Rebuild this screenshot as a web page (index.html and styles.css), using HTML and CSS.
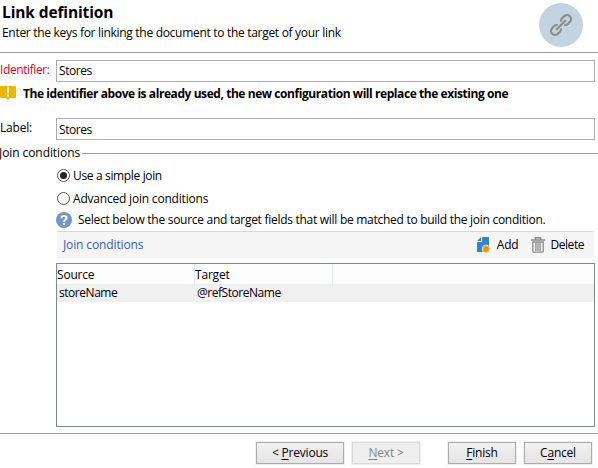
FILE: index.html
```
<!DOCTYPE html>
<html lang="en">
<head>
<meta charset="utf-8">
<title>Link definition</title>
<link rel="stylesheet" href="styles.css">
</head>
<body>
<main class="wizard">
  <header class="header">
    <div>
      <h1 class="title">Link definition</h1>
      <p class="subtitle">Enter the keys for linking the document to the target of your link</p>
    </div>
    <svg class="link-icon" width="44" height="44" viewBox="0 0 44 44">
      <circle cx="22" cy="22" r="22" fill="#c3d4e0"/>
      <g transform="translate(22 22) rotate(-45)" fill="none" stroke="#8b8c8d" stroke-width="2.200">
        <path d="M-2.500 -2.200Q-3.300 -4 -5.500 -4H-8.500a4 4 0 0 0 0 8h3Q-3.300 4 -2.500 2.200"/>
        <path d="M2.500 -2.200Q3.300 -4 5.500 -4H8.500a4 4 0 0 1 0 8h-3Q3.300 4 2.500 2.200"/>
        <path d="M-6 0H6" stroke-linecap="round"/>
      </g>
    </svg>
  </header>

  <section class="fields">
    <div class="field">
      <span class="field-label required">Identifier:</span>
      <div class="input">Stores</div>
    </div>
    <div class="warning">
      <svg width="16" height="15" viewBox="0 0 16 15">
        <path d="M1 0h14a1 1 0 0 1 1 1v10a1 1 0 0 1-1 1h-5l-2 2-2-2H1a1 1 0 0 1-1-1V1a1 1 0 0 1 1-1z" fill="#edb700"/>
        <path d="M7 1.500h2v5.500H7zM7 8.500h2v2H7z" fill="#fff"/>
      </svg>
      <strong class="warning-text">The identifier above is already used, the new configuration will replace the existing one</strong>
    </div>
    <div class="field">
      <span class="field-label">Label:</span>
      <div class="input lower">Stores</div>
    </div>
  </section>

  <section class="group">
    <div class="legend"><span>Join conditions</span></div>
    <div class="group-body">
      <div class="option"><span class="radio checked"></span><span class="simple">Use a simple join</span></div>
      <div class="option second"><span class="radio"></span><span>Advanced join conditions</span></div>
      <div class="hint">
        <svg width="16" height="16" viewBox="0 0 16 16">
          <circle cx="8" cy="8" r="8" fill="#7396c8"/>
          <path d="M5.500 6.200C5.500 3 10.600 3.200 10.600 5.900C10.600 7.700 8 7.700 8 9.700" fill="none" stroke="#fff" stroke-width="1.900"/>
          <path d="M7 11h2v2H7z" fill="#fff"/>
        </svg>
        <span class="hint-text">Select below the source and target fields that will be matched to build the join condition.</span>
      </div>
      <div class="toolbar">
        <span class="toolbar-title">Join conditions</span>
        <span class="action add">
          <svg width="14" height="16" viewBox="0 0 14 16">
            <path d="M5 0h7v15H0V5h5z" fill="#2e86d0"/>
            <path d="M0 4l4-4v4z" fill="#2e86d0"/>
            <circle cx="9" cy="12" r="4.200" fill="#f5f5f5"/>
            <path d="M9 7.800v8.200M4.800 12h8.400M6.100 9.100l5.800 5.800M11.900 9.100l-5.800 5.800" stroke="#f3a52c" stroke-width="1.200"/>
            <circle cx="9" cy="12" r="2.900" fill="#f29400"/>
          </svg>
          <span>Add</span>
        </span>
        <span class="action">
          <svg width="14" height="16" viewBox="0 0 14 16">
            <path d="M4.500 2.500V.7h5v1.800M0 3h14" fill="none" stroke="#8a8a8a" stroke-width="1.500"/>
            <path d="M1.800 5h10.400v9.200q0 1-1 1H2.800q-1 0-1-1zM4.900 6v8M7 6v8M9.100 6v8" fill="none" stroke="#8a8a8a" stroke-width="1.300"/>
          </svg>
          <span class="delete-text">Delete</span>
        </span>
      </div>
      <div class="table">
        <div class="row head"><span>Source</span><span>Target</span></div>
        <div class="row data"><span>storeName</span><span>@refStoreName</span></div>
      </div>
    </div>
  </section>

  <footer class="footer">
    <div class="button previous"><span>&lt; <u>P</u>revious</span></div>
    <div class="button disabled"><span><u>N</u>ext &gt;</span></div>
    <div class="button finish"><span><u>F</u>inish</span></div>
    <div class="button"><span>C<u>a</u>ncel</span></div>
  </footer>
</main>
</body>
</html>
```
FILE: styles.css
```
* { box-sizing: border-box; }
body {
  margin: 0;
  background: #fff;
  color: #000;
  font: 12px/16px "Open Sans", "Noto Sans", sans-serif;
  letter-spacing: -0.2px;
  white-space: nowrap;
  overflow: hidden;
}
svg { display: block; flex: none; }
.wizard { width: 598px; height: 468px; display: flex; flex-direction: column; }
.header {
  height: 53px;
  display: flex;
  justify-content: space-between;
  padding: 3px 15px 0 2px;
  border-bottom: 1px solid #9a9a9a;
}
.title { margin: 0; font-size: 15.5px; line-height: 19px; font-weight: 700; letter-spacing: -0.12px; }
.subtitle { margin: 3px 0 0; letter-spacing: -0.3px; }
.fields { padding: 7px 3px 0 0; }
.field { display: flex; }
.field-label { width: 56px; line-height: 20px; }
.required { color: #f0001e; letter-spacing: -0.4px; }
.input { flex: 1; height: 22px; border: 1px solid #abadb3; padding-left: 2px; line-height: 20px; letter-spacing: -0.45px; }
.lower { line-height: 22px; }
.warning { height: 36px; display: flex; gap: 7px; padding-top: 4px; }
.warning-text { line-height: 15px; letter-spacing: -0.43px; }
.group { padding-top: 5px; }
.legend { display: flex; align-items: center; gap: 2px; height: 16px; letter-spacing: -0.08px; }
.legend::after { content: ""; flex: 1; height: 1px; background: #9a9a9a; }
.legend span { margin-left: -1px; }
.group-body { padding: 6px 3px 0 56px; }
.option { display: flex; align-items: center; height: 17px; gap: 3px; padding-left: 1px; }
.simple { letter-spacing: -0.35px; }
.second { margin-top: 6px; }
.radio { width: 13px; height: 13px; border: 1px solid #555; border-radius: 50%; display: flex; }
.checked::after { content: ""; width: 7px; height: 7px; margin: 2px; border-radius: 50%; background: #222; }
.hint { display: flex; gap: 6px; margin-top: 5px; height: 16px; }
.hint-text { letter-spacing: -0.28px; }
.toolbar {
  height: 27px;
  margin: 3px 1px 0;
  background: #f5f5f5;
  border-top: 1px solid #d8d8d8;
  display: flex;
  align-items: center;
  padding: 0 10px 0 6px;
}
.toolbar-title { flex: 1; color: #3060c8; letter-spacing: -0.12px; }
.action { display: flex; align-items: center; gap: 5px; }
.add { margin-right: 13px; gap: 6px; }
.delete-text { letter-spacing: -0.45px; }
.table { margin-top: 5px; height: 164px; border: 1px solid #828790; }
.row { display: grid; grid-template-columns: 138px 138px 1fr; }
.head { height: 21px; background: #fcfcfc; border-bottom: 1px solid #e5effb; line-height: 22px; }
.head span { border-right: 1px solid #e0edff; }
.data { height: 17px; background: #f0f0f0; line-height: 15px; letter-spacing: -0.46px; }
.data span { padding-left: 2px; }
.footer {
  margin-top: 6px;
  border-top: 1px solid #9a9a9a;
  padding: 8px 6px 0 0;
  display: flex;
  justify-content: flex-end;
  gap: 8px;
}
.button {
  width: 68px;
  height: 22px;
  border: 1px solid #acacac;
  box-shadow: 0 0 0 1px #f0f0f0;
  background: linear-gradient(#f0f0f0, #e5e5e5);
  line-height: 20px;
  text-align: center;
}
.previous { width: 88px; }
.disabled { background: #efefef; border-color: #d9d9d9; color: #838383; }
.finish { margin-left: 20px; }
u { text-underline-offset: 2px; text-decoration-thickness: 1px; }
```
